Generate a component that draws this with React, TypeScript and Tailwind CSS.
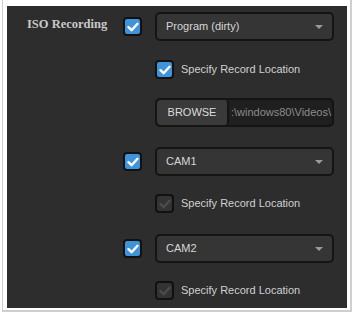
import React from "react";

function Check({ on = true }: { on?: boolean }) {
  return (
    <div
      className={
        "w-[19px] h-[19px] rounded-[4px] border-2 border-[#111] flex items-center justify-center " +
        (on ? "bg-[#3f93d8]" : "bg-[#333333]")
      }
    >
      <svg width="12" height="10" viewBox="0 0 12 10">
        <path
          d="M1.5 5.2 L4.6 8.2 L10.5 1.8"
          fill="none"
          stroke={on ? "#ffffff" : "#4c4c4c"}
          strokeWidth="2.4"
          strokeLinecap="round"
          strokeLinejoin="round"
        />
      </svg>
    </div>
  );
}

function Select({ value }: { value: string }) {
  return (
    <div className="w-[179px] h-[29px] rounded-[5px] border-2 border-[#141414] bg-[#353535] flex items-center justify-between pl-[9px] pr-[9px] text-[11px] text-[#d6d6d6]">
      <span>{value}</span>
      <svg width="8" height="4" viewBox="0 0 8 4">
        <path d="M0 0 H8 L4 4 Z" fill="#9a9a9a" />
      </svg>
    </div>
  );
}

function Specify({ on }: { on: boolean }) {
  return (
    <div className="flex items-center gap-[7px]">
      <Check on={on} />
      <span className="text-[11px] text-[#d0d0d0]">Specify Record Location</span>
    </div>
  );
}

export default function App() {
  return (
    <div className="w-[354px] h-[317px] bg-white relative" style={{ fontFamily: '"Liberation Sans", Arial, sans-serif' }}>
      <div className="ml-[2px] w-[350px] h-[312px] border-l border-r-2 border-b-2 border-[#cfcfcf] pt-[6px] pl-[4px] pr-[3px]">
        <div className="w-[340px] h-[302px] bg-[#2d2d2d] pt-[6px] flex flex-col">
          <div className="flex items-start">
            <div
              className="w-[116px] pl-[20px] pt-[3px] text-[12.5px] font-bold text-[#c9c9c9]"
              style={{ fontFamily: '"Liberation Serif", "Times New Roman", serif' }}
            >
              ISO Recording
            </div>
            <div className="w-[32px] pt-[5px]">
              <Check />
            </div>
            <Select value="Program (dirty)" />
          </div>

          <div className="pl-[148px] mt-[19px]">
            <Specify on={true} />
          </div>

          <div className="pl-[148px] mt-[19px]">
            <div className="w-[179px] h-[29px] rounded-[5px] border-2 border-[#141414] bg-[#1f1f1f] flex overflow-hidden text-[11px]">
              <div className="w-[72px] shrink-0 bg-[#3a3a3a] border-r-2 border-[#141414] rounded-[4px] flex items-center justify-center text-[#dcdcdc]">
                BROWSE
              </div>
              <div className="flex-1 min-w-0 flex items-center justify-end pr-[1px] text-[#8c8c8c] whitespace-nowrap overflow-hidden">
                :\windows80\Videos\
              </div>
            </div>
          </div>

          <div className="flex items-center mt-[20px]">
            <div className="w-[116px]" />
            <div className="w-[32px]">
              <Check />
            </div>
            <Select value="CAM1" />
          </div>

          <div className="pl-[148px] mt-[18px]">
            <Specify on={false} />
          </div>

          <div className="flex items-center mt-[21px]">
            <div className="w-[116px]" />
            <div className="w-[32px]">
              <Check />
            </div>
            <Select value="CAM2" />
          </div>

          <div className="pl-[148px] mt-[18px]">
            <Specify on={false} />
          </div>
        </div>
      </div>
    </div>
  );
}
